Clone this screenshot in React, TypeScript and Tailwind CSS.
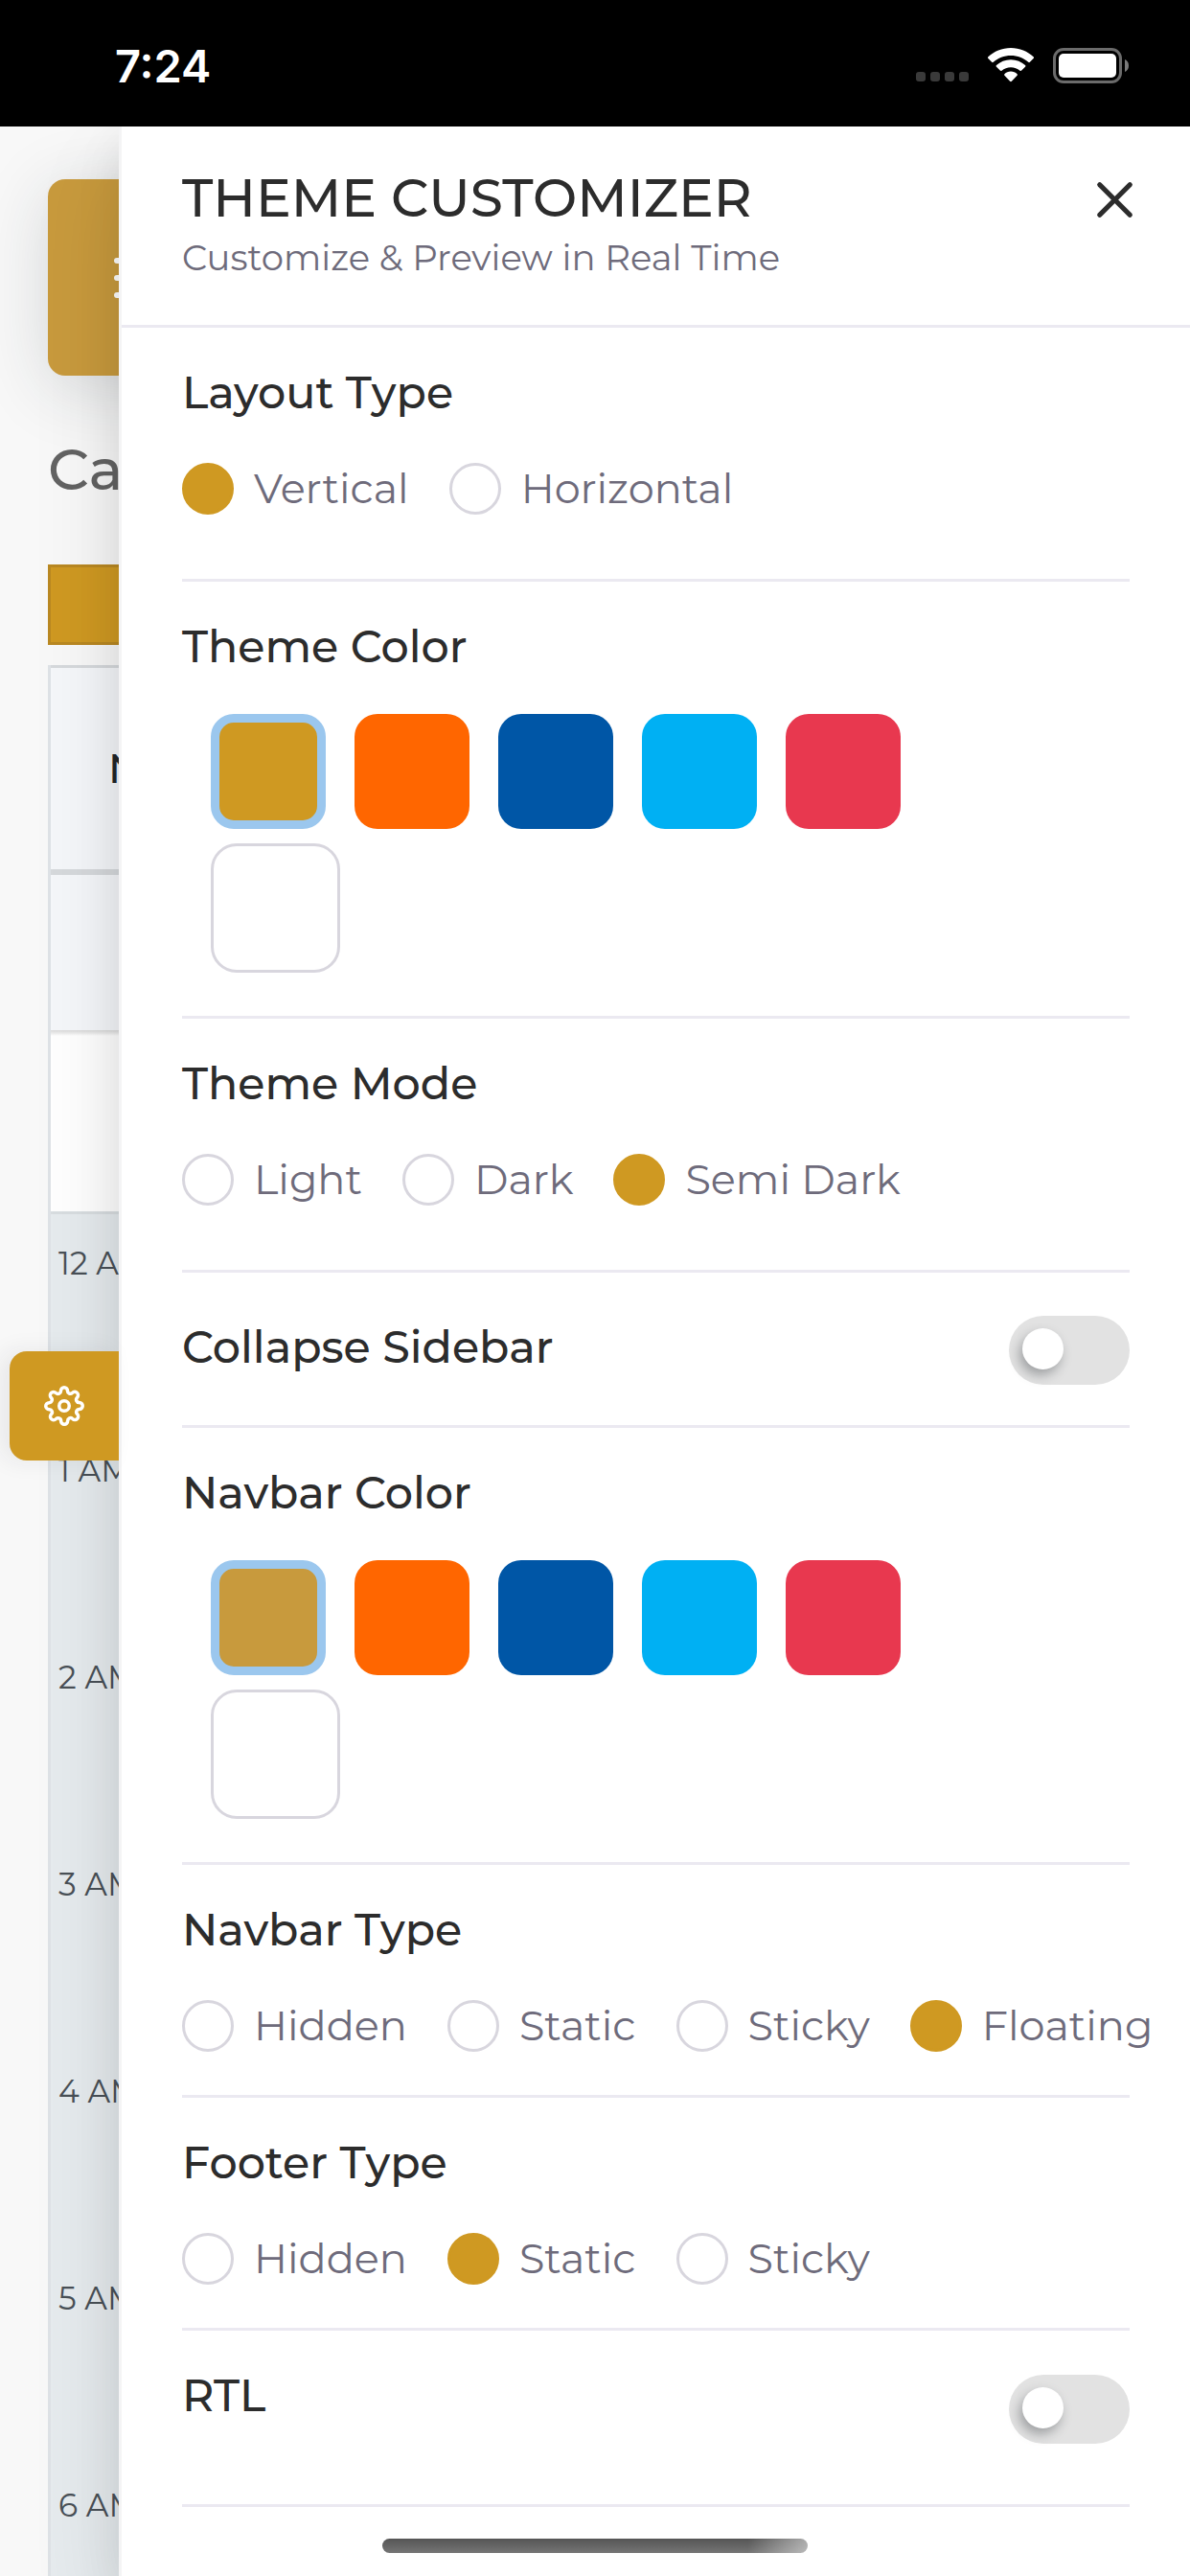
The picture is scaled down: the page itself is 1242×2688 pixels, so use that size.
import { useState } from "react";
import { FiMenu, FiSettings, FiX } from "react-icons/fi";

type Swatch = { name: string; className: string };

const themeColors: Swatch[] = [
  { name: "Gold", className: "bg-[#cf9922]" },
  { name: "Orange", className: "bg-[#ff6600]" },
  { name: "Blue", className: "bg-[#0056a6]" },
  { name: "Sky", className: "bg-[#00b0f3]" },
  { name: "Red", className: "bg-[#e8384f]" },
];

const navbarColors: Swatch[] = [
  { name: "Gold", className: "bg-[#c89a3d]" },
  ...themeColors.slice(1),
];

const hours = ["12 AM", "1 AM", "2 AM", "3 AM", "4 AM", "5 AM", "6 AM"];

function StatusBar() {
  return (
    <header className="relative z-20 flex h-[132px] shrink-0 items-center justify-between bg-black pr-16 pl-[120px] pt-1 text-white">
      <time className="font-['Inter',sans-serif] text-[47px] leading-none font-semibold">7:24</time>
      <div className="flex items-center">
        <div className="mt-6 mr-5 flex gap-[5px]">
          {[0, 1, 2, 3].map((dot) => (
            <span key={dot} className="size-[10px] rounded-[3px] bg-[#3a3a3a]" />
          ))}
        </div>
        <svg width="48" height="36" viewBox="0 0 48 36" fill="white" aria-label="Wi-Fi" className="mr-5">
          <path d="M24 0C33.200 0 41.500 3.500 47.600 9.300c.6.6.6 1.200 0 1.800l-3.700 3.700c-.5.500-1.200.5-1.700 0C37.400 10.400 31 7.900 24 7.900S10.600 10.400 5.800 14.800c-.5.5-1.200.5-1.700 0L.4 11.100c-.6-.6-.6-1.200 0-1.800C6.500 3.500 14.800 0 24 0Z" />
          <path d="M24 12.200c5.800 0 11.100 2.200 15 5.800.6.600.6 1.200 0 1.800l-3.800 3.800c-.5.500-1.100.5-1.700.1C31 21.500 27.600 20.200 24 20.200s-7 1.300-9.500 3.500c-.6.400-1.200.4-1.700-.1L9 19.800c-.6-.6-.6-1.200 0-1.800 3.900-3.600 9.200-5.800 15-5.800Z" />
          <path d="M24 24.600c2.600 0 4.900 1 6.600 2.600.5.500.5 1.100 0 1.600l-5.700 5.900c-.6.600-1.200.6-1.800 0l-5.700-5.900c-.5-.5-.5-1.100 0-1.600 1.700-1.600 4-2.600 6.600-2.600Z" />
        </svg>
        <svg width="79" height="37" viewBox="0 0 79 37" aria-label="Battery">
          <rect x="1.500" y="1.500" width="69" height="34" rx="9.500" fill="none" stroke="#6b6b6b" strokeWidth="3" />
          <rect x="6" y="6" width="60" height="25" rx="5" fill="white" />
          <path d="M75 12c2.500 1 4 3.500 4 6.500S77.500 24 75 25Z" fill="#7a7a7a" />
        </svg>
      </div>
    </header>
  );
}

function CalendarPage() {
  return (
    <main className="w-[124px] shrink-0 overflow-hidden bg-[#f8f8f8] pt-[55px] pl-[50px]">
      <div className="w-[1142px]">
        <nav className="flex h-[205px] items-center rounded-[18px] bg-[#c89a3d] pl-[63px] text-white shadow-[0_12px_72px_rgba(34,41,47,0.16)]">
          <button type="button" aria-label="Menu">
            <FiMenu size={72} />
          </button>
        </nav>
        <h1 className="mt-[62px] text-[60px] leading-[72px] font-medium text-[#636363]">Calendar</h1>
        <button type="button" aria-label="Add event" className="mt-[63px] block h-[84px] w-full border-[3px] border-[#b98822] bg-[#cf9922]" />
        <table className="mt-[21px] w-full border-separate border-spacing-0 border-l-[3px] border-[#dee2e6] text-left whitespace-nowrap">
          <thead>
            <tr>
              <th className="h-[219px] border-t-[3px] border-b-[6px] border-[#d6d9dc] bg-[#f5f7fa] pl-[60px] text-[42px] font-medium text-[#212529]">Name</th>
            </tr>
            <tr>
              <td className="h-[162px] bg-[#f5f7fa]" />
            </tr>
          </thead>
          <tbody>
            <tr>
              <td className="h-[192px] border-b-[3px] border-[#d8dde0] bg-white p-0 align-top">
                <div className="h-[6px] bg-linear-to-b from-black/15 to-transparent" />
              </td>
            </tr>
            {hours.map((hour) => (
              <tr key={hour}>
                <td className="h-[216px] bg-[#e6ebee] p-0 pt-[30px] pl-2 align-top text-[33px] leading-[42px] text-[#495057]">{hour}</td>
              </tr>
            ))}
          </tbody>
        </table>
      </div>
    </main>
  );
}

const titleClass = "text-[46px] leading-[54px] font-medium text-[#2c2c2c]";

function RadioSection({ title, options, initial, roomy = false }: { title: string; options: string[]; initial: string; roomy?: boolean }) {
  const [value, setValue] = useState(initial);
  return (
    <fieldset className={`min-w-0 border-b-[3px] border-[#ebe9f1] pt-[41px] ${roomy ? "pb-[67px]" : "pb-[45px]"}`}>
      <legend className={`float-left w-full ${titleClass}`}>{title}</legend>
      <div className="clear-both flex gap-[42px] pt-[46px] whitespace-nowrap">
        {options.map((option) => (
          <label key={option} className="flex h-[54px] shrink-0 items-center gap-[21px] text-[43px] leading-[54px] text-[#6e6b7b]">
            <input
              type="radio"
              name={title}
              checked={value === option}
              onChange={() => setValue(option)}
              className="size-[54px] appearance-none rounded-full border-[3px] border-[#d8d6de] bg-white checked:border-[#cf9922] checked:bg-[#cf9922]"
            />
            {option}
          </label>
        ))}
      </div>
    </fieldset>
  );
}

function ColorSection({ title, colors }: { title: string; colors: Swatch[] }) {
  const [selected, setSelected] = useState(colors[0].name);
  return (
    <section className="border-b-[3px] border-[#ebe9f1] pt-[41px] pb-[45px]">
      <h2 className={titleClass}>{title}</h2>
      <div className="mt-[43px] flex flex-wrap gap-x-[30px] gap-y-[15px] pr-[90px] pl-[30px]">
        {colors.map((color) => (
          <button
            key={color.name}
            type="button"
            aria-label={color.name}
            aria-pressed={selected === color.name}
            onClick={() => setSelected(color.name)}
            className={`size-[120px] rounded-3xl border-[#9bc7ee] ${selected === color.name ? "border-[9px]" : ""} ${color.className}`}
          />
        ))}
        <button type="button" aria-label="White" className="size-[135px] rounded-[27px] border-[3px] border-[#d8d6de] bg-white" />
      </div>
    </section>
  );
}

function Toggle({ id }: { id: string }) {
  return (
    <input
      id={id}
      type="checkbox"
      role="switch"
      className="h-[72px] w-[126px] appearance-none rounded-full bg-[#e2e2e2] pt-[13px] pl-[14px] before:block before:size-[43px] before:rounded-full before:bg-white before:shadow-[-3px_6px_12px_rgba(34,41,47,0.35)] before:content-['']"
    />
  );
}

function Customizer() {
  return (
    <aside className="relative min-w-0 flex-1 border-l-[3px] border-[#f4f4f5] bg-white shadow-[0_45px_90px_rgba(0,0,0,0.11),0_15px_45px_rgba(0,0,0,0.08)]">
      <button
        type="button"
        aria-label="Toggle customizer"
        className="absolute top-[1278px] right-full mr-[3px] flex size-[114px] items-center justify-center rounded-l-[18px] bg-[#cf9922] text-white shadow-[-9px_0_24px_rgba(34,41,47,0.08)]"
      >
        <FiSettings size={42} />
      </button>
      <div className="h-full overflow-x-hidden overflow-y-auto">
        <div className="flex items-start justify-between border-b-[3px] border-[#ebe9f1] pt-[45px] pr-[47px] pb-[43px] pl-[63px]">
          <div>
            <h2 className="text-[55px] leading-[60px] font-medium text-[#2c2c2c] uppercase">Theme Customizer</h2>
            <p className="pt-[5px] text-[37px] leading-[54px] text-[#6e6b7b]">Customize &amp; Preview in Real Time</p>
          </div>
          <button type="button" aria-label="Close" className="text-[#2c2c2c]">
            <FiX size={63} />
          </button>
        </div>
        <div className="px-[63px]">
          <RadioSection title="Layout Type" options={["Vertical", "Horizontal"]} initial="Vertical" roomy />
          <ColorSection title="Theme Color" colors={themeColors} />
          <RadioSection title="Theme Mode" options={["Light", "Dark", "Semi Dark"]} initial="Semi Dark" roomy />
          <div className="flex items-center justify-between border-b-[3px] border-[#ebe9f1] pt-[45px] pb-[42px]">
            <label htmlFor="collapse" className={`pb-[6px] ${titleClass}`}>Collapse Sidebar</label>
            <Toggle id="collapse" />
          </div>
          <ColorSection title="Navbar Color" colors={navbarColors} />
          <RadioSection title="Navbar Type" options={["Hidden", "Static", "Sticky", "Floating"]} initial="Floating" />
          <RadioSection title="Footer Type" options={["Hidden", "Static", "Sticky"]} initial="Static" />
          <div className="flex items-end justify-between border-b-[3px] border-[#ebe9f1] pt-[41px] pb-[63px]">
            <label htmlFor="rtl" className={`pb-[23px] ${titleClass}`}>RTL</label>
            <Toggle id="rtl" />
          </div>
        </div>
      </div>
    </aside>
  );
}

export default function App() {
  return (
    <div className="relative flex h-screen flex-col overflow-hidden bg-white font-['Montserrat','Inter',sans-serif]">
      <StatusBar />
      <div className="flex min-h-0 flex-1">
        <CalendarPage />
        <Customizer />
      </div>
      <div className="absolute bottom-6 left-1/2 z-30 h-[15px] w-[444px] -translate-x-1/2 rounded-full bg-[linear-gradient(to_right,transparent_86%,rgba(255,255,255,0.5)),linear-gradient(to_bottom,#555,#757575)]" />
    </div>
  );
}
